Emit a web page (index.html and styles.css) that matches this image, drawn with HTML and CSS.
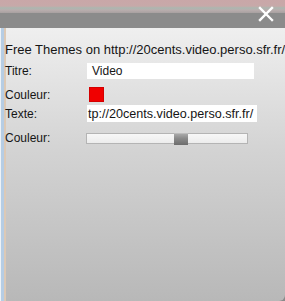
FILE: index.html
```html
<!DOCTYPE html>
<html>
<head>
<meta charset="utf-8">
<link rel="stylesheet" href="styles.css">
</head>
<body>
<div class="window">
  <div class="header">
    <div class="stripe"></div>
    <div class="titlebar">
      <svg class="close" width="16" height="16" viewBox="0 0 16 16">
        <path d="M2 2 L14 14 M14 2 L2 14" stroke="#fff" stroke-width="2.4" stroke-linecap="square"/>
      </svg>
    </div>
  </div>
  <div class="body">
    <div class="intro">Free Themes on http://20cents.video.perso.sfr.fr/</div>
    <div class="form">
      <div class="row r1">
        <span class="label">Titre:</span>
        <div class="field f1">Video</div>
      </div>
      <div class="row r2">
        <span class="label">Couleur:</span>
        <div class="swatch"></div>
      </div>
      <div class="row r3">
        <span class="label">Texte:</span>
        <div class="field f2">tp://20cents.video.perso.sfr.fr/</div>
      </div>
      <div class="row r4">
        <span class="label">Couleur:</span>
        <div class="slider"><div class="thumb"></div></div>
      </div>
    </div>
  </div>
</div>
</body>
</html>
```
FILE: styles.css
```css
html, body {
  margin: 0;
  padding: 0;
  width: 285px;
  height: 301px;
  overflow: hidden;
  background: #8a8a8a;
}
.window {
  width: 285px;
  height: 301px;
  display: flex;
  flex-direction: column;
  font-family: "Liberation Sans", Arial, sans-serif;
  font-size: 12px;
  color: #151515;
}
.header {
  display: flex;
  flex-direction: column;
}
.stripe {
  height: 13px;
  background: linear-gradient(to bottom, #c9a7a8 0, #c7a9a9 6px, #abb7b0 8px, #b9aeae 10px, #a8a0a0 13px);
}
.titlebar {
  height: 15px;
  background: #8b8b8b;
  display: flex;
  justify-content: flex-end;
  align-items: flex-start;
  padding-right: 11px;
}
.close {
  margin-top: -7px;
}
.body {
  flex: 1;
  border-bottom-right-radius: 6px;
  background:
    linear-gradient(to right, #eef2f6 0, #eef2f6 1px, #b6cde4 1px, #b6cde4 4px, #dcc9b6 4px, #dcc9b6 6px, transparent 6px) left top / 6px 100% no-repeat,
    linear-gradient(to bottom, #efefef 0, #d3d3d3 45%, #b8b8b8 100%);
  padding: 15px 0 0 5px;
}
.intro {
  font-size: 13px;
  line-height: 14px;
  white-space: nowrap;
}
.form {
  display: flex;
  flex-direction: column;
  margin-top: 6px;
}
.row {
  display: grid;
  grid-template-columns: 82px auto;
  align-items: center;
  line-height: 14px;
}
.r1 { height: 16px; }
.r2 { height: 15px; margin-top: 8px; }
.r3 { height: 17px; margin-top: 3px; }
.r4 { height: 12px; margin-top: 9px; }
.field {
  background: #fff;
  height: 100%;
  white-space: nowrap;
  overflow: hidden;
  display: flex;
  align-items: center;
}
.f1 {
  width: 162px;
  padding-left: 5px;
}
.f2 {
  width: 169px;
  padding-left: 1px;
  font-size: 12.6px;
}
.swatch {
  margin-left: 2px;
  width: 13px;
  height: 13px;
  background: #f00000;
  border: 1px solid #d40000;
}
.slider {
  margin-left: -1px;
  height: 9px;
  background: linear-gradient(to bottom, #f7f7f7, #ececec);
  border: 1px solid #b4b4b4;
  display: flex;
  align-items: center;
  padding-left: 87px;
  box-sizing: content-box;
  width: 73px;
}
.thumb {
  width: 14px;
  height: 12px;
  margin-top: 2px;
  background: linear-gradient(to bottom, #a8a8a8 0, #8a8a8a 40%, #6c6c6c 100%);
  border-top: 1px solid #bbb;
  box-sizing: border-box;
}
```
